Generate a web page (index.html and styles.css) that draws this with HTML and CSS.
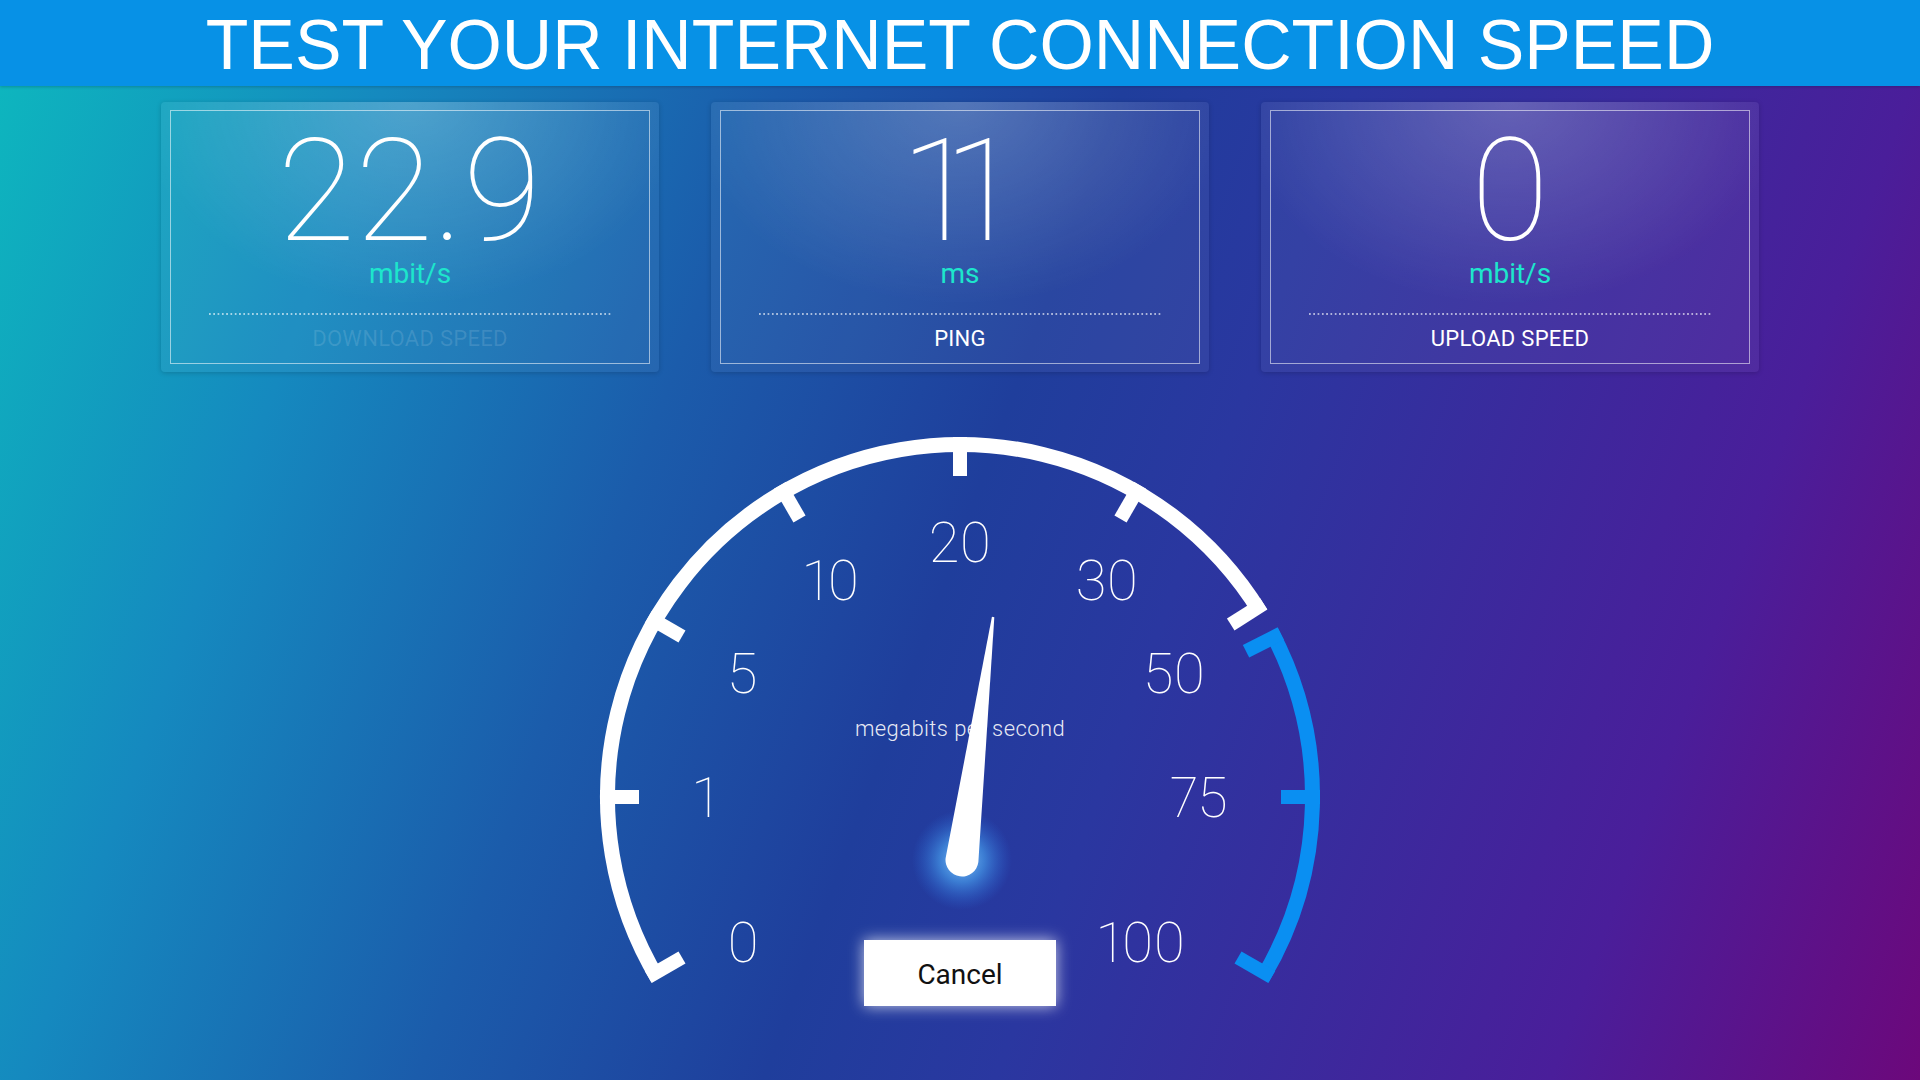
FILE: index.html
```html
<!DOCTYPE html>
<html lang="en">
<head>
    <meta charset="UTF-8">
    <meta name="viewport" content="width=device-width, initial-scale=1.0">
    <title>Internet Speed Test</title>
    <link rel="stylesheet" href="styles.css">
</head>
<body>
    <header class="topbar">
        <h1>TEST YOUR INTERNET CONNECTION SPEED</h1>
    </header>

    <section class="results">
        <div class="card">
            <div class="frame">
                <div class="value">22.9</div>
                <div class="unit">mbit/s</div>
                <div class="dots"></div>
                <div class="label label-dim">DOWNLOAD SPEED</div>
            </div>
        </div>
        <div class="card">
            <div class="frame">
                <div class="value value-ones">11</div>
                <div class="unit">ms</div>
                <div class="dots"></div>
                <div class="label">PING</div>
            </div>
        </div>
        <div class="card">
            <div class="frame">
                <div class="value">0</div>
                <div class="unit">mbit/s</div>
                <div class="dots"></div>
                <div class="label">UPLOAD SPEED</div>
            </div>
        </div>
    </section>

    <div class="gauge">
        <svg class="dial" width="760" height="640" viewBox="0 0 760 640">
            <defs>
                <radialGradient id="hubGlow">
                    <stop offset="0" stop-color="#8fd0ff" stop-opacity="0.95"/>
                    <stop offset="0.45" stop-color="#4aa8f5" stop-opacity="0.6"/>
                    <stop offset="1" stop-color="#2a6fe0" stop-opacity="0"/>
                </radialGradient>
            </defs>
            <g id="scale"></g>

            <g class="numbers">
                <text x="163" y="582">0</text>
                <text x="125" y="437">1</text>
                <text x="162" y="313">5</text>
                <text x="251" y="220">10</text>
                <text x="380" y="182">20</text>
                <text x="527" y="220">30</text>
                <text x="594" y="313">50</text>
                <text x="619" y="437">75</text>
                <text x="561" y="582">100</text>
            </g>

            <text class="caption" x="380" y="356">megabits per second</text>

            <circle cx="382" cy="480" r="50" fill="url(#hubGlow)"/>
            <path id="needle" fill="#ffffff" d="M -16.5 0 L -1.2 -245 L 1.2 -245 L 16.5 0 A 16.5 16.5 0 0 1 -16.5 0 Z"/>
        </svg>
        <button class="cancel">Cancel</button>
    </div>

    <script>
        const cx = 380, cy = 417, r = 352.5;
        const scale = document.getElementById('scale');
        const ns = 'http://www.w3.org/2000/svg';

        function pt(deg, rad) {
            const a = deg * Math.PI / 180;
            return [cx + rad * Math.cos(a), cy - rad * Math.sin(a)];
        }

        function arc(from, to, color) {
            const [x1, y1] = pt(from, r);
            const [x2, y2] = pt(to, r);
            const large = (from - to) > 180 ? 1 : 0;
            const p = document.createElementNS(ns, 'path');
            p.setAttribute('d', `M ${x1} ${y1} A ${r} ${r} 0 ${large} 1 ${x2} ${y2}`);
            p.setAttribute('fill', 'none');
            p.setAttribute('stroke', color);
            p.setAttribute('stroke-width', 15);
            scale.appendChild(p);
        }

        function tick(deg, color) {
            const [x1, y1] = pt(deg, 360);
            const [x2, y2] = pt(deg, 321);
            const l = document.createElementNS(ns, 'line');
            l.setAttribute('x1', x1);
            l.setAttribute('y1', y1);
            l.setAttribute('x2', x2);
            l.setAttribute('y2', y2);
            l.setAttribute('stroke', color);
            l.setAttribute('stroke-width', 14);
            scale.appendChild(l);
        }

        // white part 0..50, blue part 50..100
        arc(211, 31.5, '#ffffff');
        arc(28, -31, '#0a8ff2');
        [210, 180, 150, 120, 90, 60, 32.5].forEach(d => tick(d, '#ffffff'));
        [27, 0, -30].forEach(d => tick(d, '#0a8ff2'));

        // needle points at the current download value
        document.getElementById('needle').setAttribute('transform', 'translate(382 480) rotate(7.3)');
    </script>
</body>
</html>
```

FILE: styles.css
```css
body {
    margin: 0;
    height: 100vh;
    overflow: hidden;
    font-family: Roboto, "Liberation Sans", sans-serif;
    color: #ffffff;
    background: linear-gradient(110deg, #0db9be 0%, #1589bf 18%, #1b5cab 35%, #1f3e9c 50%, #2a37a0 60%, #4a1e9a 84%, #6c087b 100%);
}

.topbar {
    height: 86px;
    background: #0791e6;
    overflow: hidden;
    text-align: center;
    box-shadow: 0 1px 3px rgba(0, 0, 0, 0.2);
}

.topbar h1 {
    margin: 0;
    font-family: "Liberation Sans", Arial, sans-serif;
    font-weight: normal;
    font-size: 69.8px;
    line-height: 90px;
    color: #ffffff;
}

.results {
    display: flex;
    justify-content: center;
    gap: 52px;
    margin-top: 16px;
}

.card {
    width: 498px;
    height: 270px;
    box-sizing: border-box;
    padding: 8px 9px;
    border-radius: 4px;
    background:
        radial-gradient(ellipse 55% 75% at 50% 0%, rgba(255, 255, 255, 0.2), rgba(255, 255, 255, 0) 100%),
        rgba(255, 255, 255, 0.05);
    box-shadow: 0 1px 5px rgba(0, 0, 0, 0.18);
}

.frame {
    height: 100%;
    box-sizing: border-box;
    border: 1px solid rgba(255, 255, 255, 0.55);
    display: flex;
    flex-direction: column;
    align-items: center;
    padding-top: 19px;
}

.value {
    font-size: 142px;
    font-weight: 100;
    line-height: 124px;
    font-variant-numeric: proportional-nums;
}

/* the digit one has wide side bearings, pull the pair together */
.value-ones {
    letter-spacing: -20px;
    margin-left: -26px;
}

.unit {
    margin-top: 6px;
    font-size: 28px;
    font-weight: 400;
    line-height: 1;
    color: #1de6cc;
}

.dots {
    align-self: stretch;
    margin: 25px 38px 0;
    height: 2px;
    background: linear-gradient(to right, rgba(255, 255, 255, 0.6) 1.4px, transparent 1.4px) 0 0 / 4.3px 2px repeat-x;
}

.label {
    margin-top: 13px;
    font-size: 22px;
    line-height: 1;
    letter-spacing: 0.3px;
}

.label-dim {
    color: rgba(255, 255, 255, 0.13);
}

.gauge {
    position: relative;
    width: 760px;
    height: 640px;
    margin: 8px auto 0;
}

.dial {
    display: block;
}

.numbers text {
    font-family: Roboto, "Liberation Sans", sans-serif;
    font-size: 56px;
    font-weight: 100;
    font-variant-numeric: proportional-nums;
    fill: #ffffff;
    text-anchor: middle;
}

.caption {
    font-family: Roboto, "Liberation Sans", sans-serif;
    font-size: 22px;
    font-weight: 300;
    letter-spacing: 0.4px;
    fill: rgba(255, 255, 255, 0.9);
    text-anchor: middle;
}

.cancel {
    position: absolute;
    left: 284px;
    top: 560px;
    width: 192px;
    height: 66px;
    padding-top: 3px;
    border: none;
    background: #ffffff;
    color: #111111;
    font-family: Roboto, "Liberation Sans", sans-serif;
    font-size: 28px;
    cursor: pointer;
    box-shadow: 0 0 14px rgba(255, 255, 255, 0.75);
}
```
